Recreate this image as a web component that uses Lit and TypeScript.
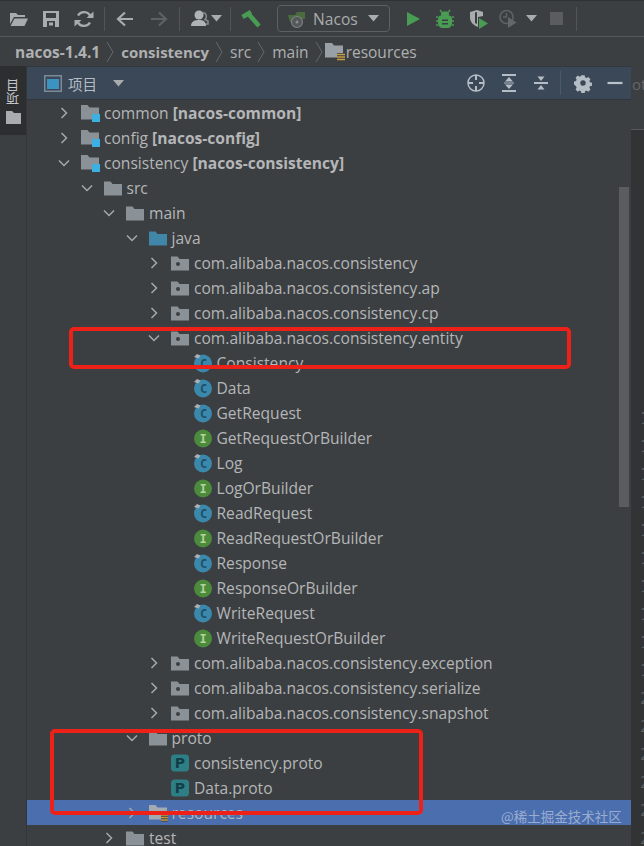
import { LitElement, html, css, svg } from "lit";
import { customElement } from "lit/decorators.js";

type Kind = "module" | "folder" | "java" | "package" | "class" | "iface" | "proto" | "res";
interface Row {
  level: number;
  kind: Kind;
  name: string;
  bold?: string;
  open?: boolean;
  leaf?: boolean;
  selected?: boolean;
}

const pkg = "com.alibaba.nacos.consistency";
const rows: Row[] = [
  { level: 0, kind: "module", name: "common", bold: "[nacos-common]" },
  { level: 0, kind: "module", name: "config", bold: "[nacos-config]" },
  { level: 0, kind: "module", name: "consistency", bold: "[nacos-consistency]", open: true },
  { level: 1, kind: "folder", name: "src", open: true },
  { level: 2, kind: "folder", name: "main", open: true },
  { level: 3, kind: "java", name: "java", open: true },
  { level: 4, kind: "package", name: pkg },
  { level: 4, kind: "package", name: pkg + ".ap" },
  { level: 4, kind: "package", name: pkg + ".cp" },
  { level: 4, kind: "package", name: pkg + ".entity", open: true },
  { level: 5, kind: "class", name: "Consistency", leaf: true },
  { level: 5, kind: "class", name: "Data", leaf: true },
  { level: 5, kind: "class", name: "GetRequest", leaf: true },
  { level: 5, kind: "iface", name: "GetRequestOrBuilder", leaf: true },
  { level: 5, kind: "class", name: "Log", leaf: true },
  { level: 5, kind: "iface", name: "LogOrBuilder", leaf: true },
  { level: 5, kind: "class", name: "ReadRequest", leaf: true },
  { level: 5, kind: "iface", name: "ReadRequestOrBuilder", leaf: true },
  { level: 5, kind: "class", name: "Response", leaf: true },
  { level: 5, kind: "iface", name: "ResponseOrBuilder", leaf: true },
  { level: 5, kind: "class", name: "WriteRequest", leaf: true },
  { level: 5, kind: "iface", name: "WriteRequestOrBuilder", leaf: true },
  { level: 4, kind: "package", name: pkg + ".exception" },
  { level: 4, kind: "package", name: pkg + ".serialize" },
  { level: 4, kind: "package", name: pkg + ".snapshot" },
  { level: 3, kind: "folder", name: "proto", open: true },
  { level: 4, kind: "proto", name: "consistency.proto", leaf: true },
  { level: 4, kind: "proto", name: "Data.proto", leaf: true },
  { level: 3, kind: "res", name: "resources", selected: true },
  { level: 2, kind: "folder", name: "test" },
];

const folderPath = "M0 2.5h6.5l2 2.5H18v11.5H0z";

function nodeIcon(kind: Kind) {
  switch (kind) {
    case "module":
      return svg`<svg class="ni" viewBox="0 0 18 18"><path d="M0 1h6.500l2 2.500H18v12H0z" fill="#8a9297"/><rect x="11" y="10" width="8" height="8" fill="#3cb0e0"/></svg>`;
    case "folder":
      return svg`<svg class="ni" viewBox="0 0 18 18"><path d="${folderPath}" fill="#8a9297"/></svg>`;
    case "java":
      return svg`<svg class="ni" viewBox="0 0 18 18"><path d="${folderPath}" fill="#3f86a8"/></svg>`;
    case "package":
      return svg`<svg class="ni" viewBox="0 0 18 18"><path d="${folderPath}" fill="#8a9297"/><circle cx="7" cy="10" r="2" fill="#3c3f41"/></svg>`;
    case "res":
      return svg`<svg class="ni" viewBox="0 0 18 18"><path d="M0 1h6.500l2 2.500H18v12H0z" fill="#a3abb2"/><rect x="12" y="10" width="7" height="7.500" fill="#3c3f41"/><path d="M12 11h7M12 13.500h7M12 16h7" stroke="#c79a45" stroke-width="1.500"/></svg>`;
    case "class":
      return svg`<svg class="ni" viewBox="0 0 18 18"><circle cx="9" cy="9.500" r="9" fill="#3b88ad"/><text x="9.500" y="14" text-anchor="middle" class="glyph" fill="#1f4f68">C</text><path d="M0 3 3 0 6.500 1.500 4.500 4.500z" fill="#a7b0b5"/></svg>`;
    case "iface":
      return svg`<svg class="ni" viewBox="0 0 18 18"><circle cx="9" cy="9.500" r="9" fill="#4c8a3c"/><text x="9" y="14" text-anchor="middle" class="glyph" fill="#b4d39a">I</text></svg>`;
    case "proto":
      return svg`<svg class="ni" viewBox="0 0 18 18"><rect x="0" y=".5" width="18" height="17" rx="3.500" fill="#2d7f85"/><text x="9" y="14" text-anchor="middle" class="glyph big" fill="#123f47">P</text></svg>`;
  }
}

const chevron = (open: boolean) =>
  open
    ? svg`<svg class="chev" viewBox="0 0 14 14"><path d="M2 4.500 7 9.500 12 4.500" fill="none" stroke="#a6a9ab" stroke-width="1.500"/></svg>`
    : svg`<svg class="chev" viewBox="0 0 14 14"><path d="M4.500 2 9.500 7 4.500 12" fill="none" stroke="#a6a9ab" stroke-width="1.500"/></svg>`;

const sepChev = html`<svg class="crumb-sep" viewBox="0 0 8 22"><path d="M1 1 7 11 1 21" fill="none" stroke="#66696b" stroke-width="1"/></svg>`;

const caret = html`<svg class="caret" viewBox="0 0 11 7"><path d="M0 0h11L5.500 6.500z" fill="#a9acae"/></svg>`;

@customElement("app-root")
export class AppRoot extends LitElement {
  static styles = css`
    :host {
      display: block;
      width: 644px;
      height: 846px;
      overflow: hidden;
      position: relative;
      background: #3c3f41;
      color: #b4b6b8;
      font-family: "Open Sans", "Noto Sans CJK SC", sans-serif;
      font-size: 15.6px;
    }
    .toolbar {
      box-sizing: border-box;
      border-top: 1px solid #2f3133;
      border-bottom: 1px solid #555759;
      height: 37px;
      display: flex;
      align-items: center;
      padding-left: 9px;
    }
    .tb {
      width: 20px;
      height: 20px;
      flex: none;
    }
    .ml-1 { margin-left: 1px; }
    .ml-8 { margin-left: 8px; }
    .ml-9 { margin-left: 9px; }
    .ml-10 { margin-left: 10px; }
    .ml-12 { margin-left: 12px; }
    .ml-13 { margin-left: 13px; }
    .ml-14 { margin-left: 14px; }
    .ml-16 { margin-left: 16px; }
    .wrap { display: flex; }
    .tsep {
      width: 1px;
      height: 24px;
      background: #525456;
      flex: none;
    }
    .combo {
      width: 113px;
      height: 27px;
      box-sizing: border-box;
      border: 1px solid #5d6062;
      border-radius: 4px;
      display: flex;
      align-items: center;
      padding-left: 9px;
      gap: 6px;
      flex: none;
    }
    .combo svg.run { width: 20px; height: 20px; }
    .combo span { color: #a9abad; }
    .combo .caret { margin-left: 4px; }
    .caret { width: 11px; height: 7px; flex: none; }
    .crumbs {
      height: 29px;
      box-sizing: border-box;
      display: flex;
      align-items: center;
      padding-left: 15px;
      white-space: nowrap;
      color: #aeb0b2;
      font-size: 15.5px;
    }
    .crumbs b { font-weight: 700; }
    .crumbs b.tight { font-size: 15px; }
    .crumb-sep {
      width: 8px;
      height: 22px;
      margin: 0 7px 0 6px;
      flex: none;
    }
    .crumb-folder {
      width: 20px;
      height: 20px;
      margin-left: -5px;
      margin-right: 1px;
      flex: none;
    }
    .main {
      display: flex;
      height: 780px;
    }
    .stripe {
      width: 27px;
      flex: none;
      box-sizing: border-box;
      border-right: 1px solid #343638;
      background: #3c3f41;
    }
    .stripe-top {
      height: 69px;
      background: #2c2e30;
      display: flex;
      flex-direction: column;
      align-items: center;
      padding-top: 13px;
      box-sizing: border-box;
    }
    .stripe-label {
      writing-mode: vertical-rl;
      transform: rotate(180deg);
      font-size: 13px;
      line-height: 14px;
      color: #c4c6c8;
      font-family: "Noto Sans CJK SC", sans-serif;
    }
    .stripe-icon {
      width: 15px;
      height: 13px;
      margin-top: 6px;
      flex: none;
    }
    .panel {
      width: 604px;
      flex: none;
      position: relative;
      display: flex;
      flex-direction: column;
    }
    .phead {
      height: 34px;
      box-sizing: border-box;
      flex: none;
      background: #3a4858;
      border-top: 1px solid #33383d;
      border-bottom: 1px solid #32353a;
      display: flex;
      align-items: center;
      padding-left: 17px;
    }
    .view-icon { width: 18px; height: 17px; flex: none; }
    .ptitle {
      margin-left: 6px;
      font-family: "Noto Sans CJK SC", sans-serif;
      font-size: 14.5px;
      color: #b5bcc3;
    }
    .phead .caret { margin-left: 16px; }
    .pspacer { flex: 1; }
    .pi { width: 20px; height: 20px; flex: none; }
    .pi-gap { margin-left: 13px; }
    .pi-gap2 { margin-left: 12px; }
    .psep { width: 1px; height: 24px; background: #4b5a6a; margin: 0 12px 0 9px; flex: none; }
    .pi-last { margin-right: 6px; margin-left: 12px; }
    .tree { flex: 1; overflow: hidden; }
    .row {
      height: 25px;
      display: flex;
      align-items: center;
      white-space: nowrap;
      box-sizing: border-box;
    }
    .row.sel { background: #4b6eaf; }
    .chev { width: 14px; height: 14px; flex: none; }
    .chev-space { width: 14px; flex: none; }
    .ni { width: 18px; height: 18px; flex: none; margin-left: 10px; margin-right: 5px; overflow: visible; }
    .glyph { font: 700 12px "DejaVu Sans Mono", monospace; }
    .glyph.big { font: 700 14px "DejaVu Sans", sans-serif; }
    .row b { font-weight: 700; margin-left: 4px; }
    .scroll {
      position: absolute;
      left: 592px;
      top: 121px;
      width: 10px;
      height: 320px;
      background: #5a5c5e;
    }
    .editor {
      flex: 1;
      display: flex;
      flex-direction: column;
      background: #313335;
      overflow: hidden;
    }
    .etab {
      height: 64px;
      flex: none;
      box-sizing: border-box;
      background: #3c3f41;
      border-bottom: 1px solid #55585a;
      padding: 8px 0 0 1px;
      color: #636668;
      font-size: 15px;
      white-space: nowrap;
    }
    .gutter {
      padding: 275px 0 0 9px;
      font: 15px/28px "DejaVu Sans Mono", monospace;
      color: #5a5e60;
      white-space: nowrap;
    }
    .red {
      position: absolute;
      box-sizing: border-box;
      border: 4px solid #ee2119;
      border-radius: 5px;
      pointer-events: none;
    }
    .red.a { left: 69px; top: 327px; width: 502px; height: 42px; }
    .red.b { left: 50px; top: 729px; width: 373px; height: 86px; }
    .mark {
      position: absolute;
      left: 501px;
      top: 806px;
      font-family: "Noto Sans CJK SC", sans-serif;
      font-size: 13.5px;
      line-height: 20px;
      color: rgba(205, 215, 230, 0.62);
      white-space: nowrap;
    }
  `;

  private renderRow(r: Row) {
    return html`<div class="row ${r.selected ? "sel" : ""}" style="padding-left:${30 + r.level * 22.5}px">
      ${r.leaf ? html`<span class="chev-space"></span>` : chevron(!!r.open)}
      ${nodeIcon(r.kind)}<span>${r.name}</span>${r.bold ? html`<b>${r.bold}</b>` : ""}
    </div>`;
  }

  render() {
    const digits = [...Array(16).keys()].map((i) => (i < 10 ? "1" : "2"));
    return html`
      <div class="toolbar">
        <svg class="tb" viewBox="0 0 20 20"><path d="M1 4h6l2 2h7v2H5L1 15z" fill="#a9acae"/><path d="M5.500 9.500H19L15.500 17H1.500z" fill="#a9acae"/></svg>
        <svg class="tb ml-12" viewBox="0 0 20 20"><path fill-rule="evenodd" d="M2 2h16v16H2zM5 4v5h10V4zM6 12v6h8v-6z" fill="#a9acae"/><rect x="8" y="13.500" width="4" height="3" fill="#a9acae"/></svg>
        <svg class="tb ml-13" viewBox="0 0 20 20"><path d="M16.500 7.500A7 7 0 0 0 4 6.500M3.500 12.500A7 7 0 0 0 16 13.500" fill="none" stroke="#a9acae" stroke-width="2.400"/><path d="M12.500 9h7V2.500zM7.500 11h-7v6.500z" fill="#a9acae"/></svg>
        <span class="tsep ml-10"></span>
        <svg class="tb ml-10" viewBox="0 0 20 20"><path d="M18 10H4M10 3.500 3 10l7 6.500" fill="none" stroke="#a9acae" stroke-width="2.200"/></svg>
        <svg class="tb ml-14" viewBox="0 0 20 20"><path d="M2 10h14M10 3.500 17 10l-7 6.500" fill="none" stroke="#5e6163" stroke-width="2.200"/></svg>
        <span class="tsep ml-10"></span>
        <svg class="tb ml-10" viewBox="0 0 20 20"><circle cx="9" cy="6" r="4.500" fill="#b0b3b5"/><path d="M1 17c0-5 4-6 8-6s7 1 7 6z" fill="#b0b3b5"/><path d="M13 3.500a4 4 0 0 1 2 7l3 1.500v3h-2" fill="none" stroke="#8a8d8f" stroke-width="1.500"/></svg>
        <span class="wrap ml-1">${caret}</span>
        <span class="tsep ml-8"></span>
        <svg class="tb ml-10" viewBox="0 0 20 20"><path d="M1.500 8 10 3" fill="none" stroke="#499c54" stroke-width="4.500"/><path d="M8 5.500 18 17" fill="none" stroke="#499c54" stroke-width="4.500"/></svg>
        <div class="combo ml-16">
          <svg class="run" viewBox="0 0 20 20"><path d="M1 6h7l2-3h8v7h-5v3H3z" fill="#4c6b3f"/><circle cx="10" cy="13" r="5.500" fill="#54585a" stroke="#7c8082" stroke-width="1.200"/><circle cx="10" cy="13" r="1.500" fill="#8a8d8f"/></svg>
          <span>Nacos</span>
          ${caret}
        </div>
        <svg class="tb ml-13" viewBox="0 0 20 20"><path d="M4 3 17 10 4 17z" fill="#499c54"/></svg>
        <svg class="tb ml-12" viewBox="0 0 20 20"><path d="M6.500 3 5 1M13.500 3 15 1M3 8H1M3 12H1M3 16H1M17 8h2M17 12h2M17 16h2" stroke="#499c54" stroke-width="1.500"/><rect x="6" y="2.500" width="8" height="5" rx="2" fill="#499c54"/><path fill-rule="evenodd" d="M5.500 6.500h9A3 3 0 0 1 17 9.500v5a4.500 4.500 0 0 1-4.500 4.500h-5A4.500 4.500 0 0 1 3 14.500v-5a3 3 0 0 1 2.500-3zM7 10.500v1.500h6v-1.500zM7 14v1.500h6V14z" fill="#499c54"/></svg>
        <svg class="tb ml-14" viewBox="0 0 20 20"><path d="M1 3 8 1l6 2v4l-5 1v10C4 16 1 13 1 8z" fill="#a9acae"/><path d="M6 3.500 8 3v12L6 14z" fill="#3c3f41"/><path d="M10 9l9 5.500-9 5.500z" fill="#499c54"/></svg>
        <svg class="tb ml-9" viewBox="0 0 20 20"><circle cx="8.500" cy="8" r="6.500" fill="none" stroke="#5f6264" stroke-width="1.600"/><path d="M8.500 4v4H5" fill="none" stroke="#5f6264" stroke-width="1.400"/><path d="M10 8l8.500 5.500L10 19z" fill="#64676a"/></svg>
        <span class="wrap ml-8">${caret}</span>
        <svg class="tb ml-10" viewBox="0 0 20 20"><rect x="3" y="3" width="13" height="13" fill="#5a5c5e"/></svg>
        <span class="tsep ml-9"></span>
      </div>
      <div class="crumbs">
        <b>nacos-1.4.1</b>${sepChev}<b class="tight">consistency</b>${sepChev}<span>src</span>${sepChev}<span>main</span>${sepChev}
        <svg class="crumb-folder" viewBox="0 0 20 20"><path d="M0 1h7l2 2.500h9v12H0z" fill="#99a1a7"/><rect x="12" y="11" width="8" height="8" fill="#3c3f41"/><path d="M12 12.500h8M12 15h8M12 17.500h8" stroke="#c79a45" stroke-width="1.500"/></svg>
        <span>resources</span>
      </div>
      <div class="main">
        <div class="stripe">
          <div class="stripe-top">
            <span class="stripe-label">项目</span>
            <svg class="stripe-icon" viewBox="0 0 15 13"><path d="M0 0h6l2 2h7v11H0z" fill="#a9acae"/></svg>
          </div>
        </div>
        <div class="panel">
          <div class="phead">
            <svg class="view-icon" viewBox="0 0 18 17"><rect x=".75" y=".75" width="16.500" height="15.500" fill="none" stroke="#7d8b98" stroke-width="1.500"/><rect x="3" y="4" width="12" height="10" fill="#3d93bf"/></svg>
            <span class="ptitle">项目</span>
            ${caret}
            <span class="pspacer"></span>
            <svg class="pi" viewBox="0 0 20 20"><circle cx="10" cy="10" r="8" fill="none" stroke="#b4bcc4" stroke-width="1.500"/><path d="M10 2v5M10 13v5M2 10h5M13 10h5" stroke="#b4bcc4" stroke-width="2"/></svg>
            <svg class="pi pi-gap" viewBox="0 0 20 20"><path d="M3 2h14M3 18h14" stroke="#b4bcc4" stroke-width="2"/><path d="M10 4 14 8.500H6zM10 16 6 11.500h8z" fill="#b4bcc4"/><path d="M5 10h10" stroke="#b4bcc4" stroke-width="1"/></svg>
            <svg class="pi pi-gap2" viewBox="0 0 20 20"><path d="M3 10h14" stroke="#b4bcc4" stroke-width="2"/><path d="M10 8 6.500 3.500h7zM10 12l3.500 4.500h-7z" fill="#b4bcc4"/></svg>
            <span class="psep"></span>
            <svg class="pi" viewBox="0 0 20 20"><path fill-rule="evenodd" d="M8.200 2h3.600l.5 2.300 1.500.7 2-1.200 2.500 2.500-1.200 2 .6 1.500 2.300.5v3.400l-2.300.5-.6 1.500 1.200 2-2.500 2.500-2-1.200-1.500.6-.5 2.300H8.200l-.5-2.300-1.500-.6-2 1.200-2.500-2.500 1.200-2-.6-1.500L0 12.300V8.800l2.300-.5.600-1.500-1.200-2 2.500-2.500 2 1.200 1.500-.7zM10 7.500a3 3 0 1 0 0 6 3 3 0 0 0 0-6z" fill="#b4bcc4" transform="translate(1 .5) scale(.9)"/></svg>
            <svg class="pi pi-last" viewBox="0 0 20 20"><path d="M2.500 10h15" stroke="#b9c2ca" stroke-width="2.200"/></svg>
          </div>
          <div class="tree">${rows.map((r) => this.renderRow(r))}</div>
          <div class="scroll"></div>
        </div>
        <div class="editor">
          <div class="etab">ot</div>
          <div class="gutter">${digits.map((d) => html`<div>${d}</div>`)}</div>
        </div>
      </div>
      <div class="red a"></div>
      <div class="red b"></div>
      <div class="mark">@稀土掘金技术社区</div>
    `;
  }
}
